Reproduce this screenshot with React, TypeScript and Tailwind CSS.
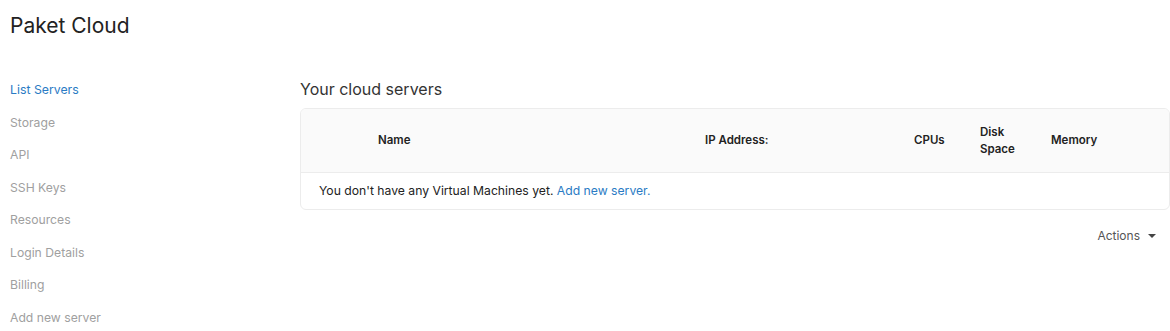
export default function App() {
  const nav = ["Storage", "API", "SSH Keys", "Resources", "Login Details", "Billing", "Add new server"];
  return (
    <div className="w-[1170px] h-[331px] bg-white overflow-hidden text-[#333]" style={{ fontFamily: "Inter, 'Noto Sans', sans-serif" }}>
      <div className="pl-[10px] pt-[13px] text-[21px] leading-[26px] text-[#222]">Paket Cloud</div>
      <div className="flex mt-[41px]">
        <div className="w-[300px] shrink-0 pl-[10px] pt-[1px] flex flex-col">
          <div className="h-[32.5px] leading-[18px] text-[12.3px] text-[#2a7bc4]">List Servers</div>
          {nav.map((n) => (
            <div key={n} className="h-[32.5px] leading-[18px] text-[12.2px] text-[#a0a0a0]">{n}</div>
          ))}
        </div>
        <div className="w-[870px] shrink-0">
          <div className="text-[16px] leading-[18px] text-[#333] mb-[10px]">Your cloud servers</div>
          <div className="border border-[#ececec] rounded-[6px] overflow-hidden">
            <div className="grid grid-cols-[77px_327px_209px_66px_71px_1fr] h-[64px] items-center bg-[#fafafa] border-b border-[#ececec] text-[11.5px] font-semibold text-[#222]">
              <div />
              <div>Name</div>
              <div>IP Address:</div>
              <div>CPUs</div>
              <div className="leading-[17px]">Disk<br />Space</div>
              <div>Memory</div>
            </div>
            <div className="h-[36px] flex items-center pl-[18px] text-[12.2px] text-[#222]">
              You don't have any Virtual Machines yet.&nbsp;<span className="text-[#2a7bc4]">Add new server.</span>
            </div>
          </div>
          <div className="flex justify-end pr-[14px] mt-[17px]">
            <div className="flex items-center gap-[8px] text-[12px] text-[#555]">
              <span>Actions</span>
              <span className="w-0 h-0 border-l-[4px] border-r-[4px] border-t-[4px] border-l-transparent border-r-transparent border-t-[#444]" />
            </div>
          </div>
        </div>
      </div>
    </div>
  );
}
